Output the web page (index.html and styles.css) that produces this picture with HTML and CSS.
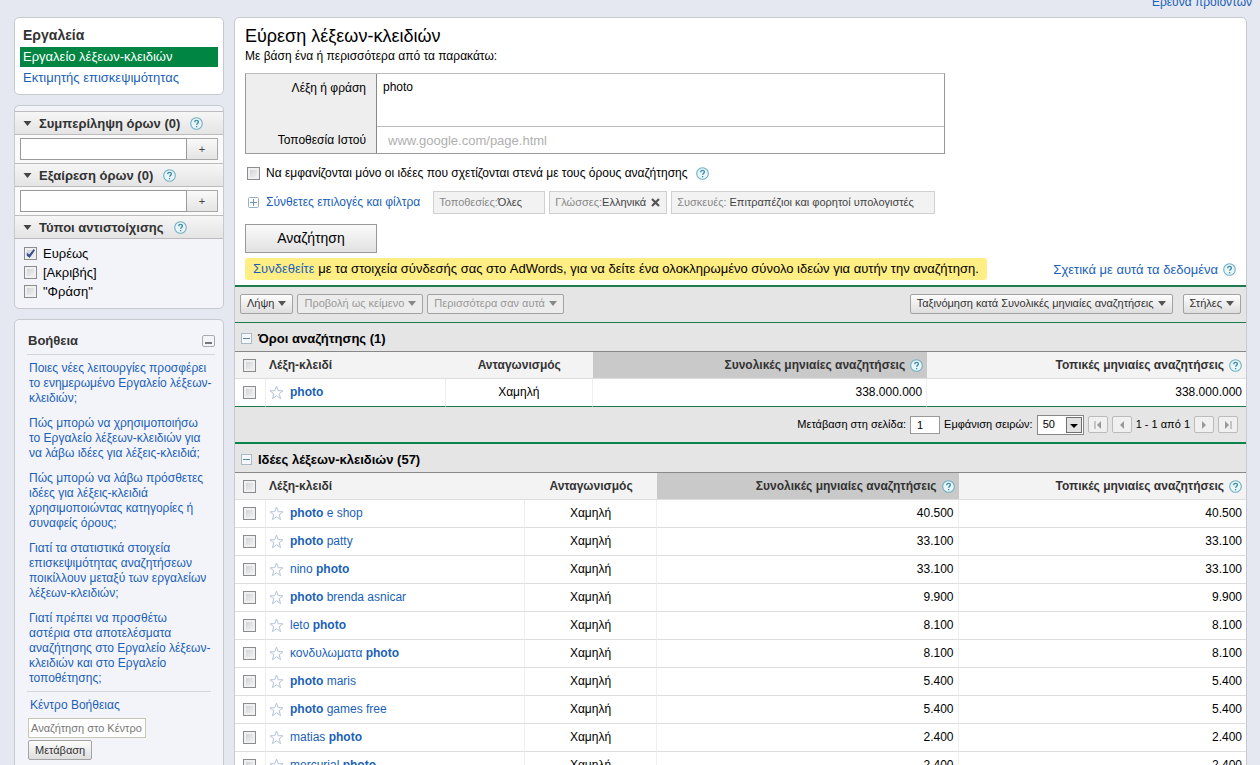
FILE: index.html
```html
<!DOCTYPE html>
<html lang="el">
<head>
<meta charset="utf-8">
<title>Εργαλείο λέξεων-κλειδιών</title>
<link rel="stylesheet" href="styles.css">
</head>
<body>
<svg width="0" height="0" class="defs" aria-hidden="true">
  <symbol id="help" viewBox="0 0 13 13"><circle cx="6.500" cy="6.500" r="5.800" fill="#e9f6fb" stroke="#6faec2" stroke-width="1.100"/><path d="M4.700 5.200c0-2.400 3.800-2.300 3.700-.1 0 1.300-1.800 1.300-1.800 2.700M6.600 9v1.300" fill="none" stroke="#3d8ba5" stroke-width="1.300"/></symbol>
  <symbol id="star" viewBox="0 0 15 15"><path d="M7.500 1l1.700 4.700 4.800.1-3.800 3 1.400 4.900-4.100-2.900-4.100 2.900 1.400-4.900-3.800-3 4.800-.1z" fill="#fff" stroke="#b4c2dc"/></symbol>
  <symbol id="minus" viewBox="0 0 11 11"><rect x=".5" y=".5" width="10" height="10" fill="#f4f8fa" stroke="#a9b9c6"/><path d="M2 5.500h7" stroke="#5b8599"/></symbol>
  <symbol id="plus" viewBox="0 0 11 11"><rect x=".5" y=".5" width="10" height="10" rx="1" fill="#fafcfd" stroke="#9dafbd"/><path d="M2 5.500h7M5.500 2v7" stroke="#7895a8"/></symbol>
  <symbol id="down" viewBox="0 0 8 5"><path d="M0 0h8L4 5z" fill="currentColor"/></symbol>
</svg>
<header class="top"><a href="#">Έρευνα προϊόντων</a></header>
<div class="page">
  <aside class="side">
    <nav class="card tools">
      <h2>Εργαλεία</h2>
      <a class="current" href="#">Εργαλείο λέξεων-κλειδιών</a>
      <a href="#">Εκτιμητής επισκεψιμότητας</a>
    </nav>
    <section class="card filters">
      <h3><svg class="tri"><use href="#down"/></svg>Συμπερίληψη όρων (0)<svg class="help"><use href="#help"/></svg></h3>
      <div class="add"><input type="text" aria-label="Συμπερίληψη όρων"><button>+</button></div>
      <h3><svg class="tri"><use href="#down"/></svg>Εξαίρεση όρων (0)<svg class="help"><use href="#help"/></svg></h3>
      <div class="add"><input type="text" aria-label="Εξαίρεση όρων"><button>+</button></div>
      <h3><svg class="tri"><use href="#down"/></svg>Τύποι αντιστοίχισης<svg class="help"><use href="#help"/></svg></h3>
      <div class="types">
        <label><input type="checkbox" checked>Ευρέως</label>
        <label><input type="checkbox">[Ακριβής]</label>
        <label><input type="checkbox">"Φράση"</label>
      </div>
    </section>
    <section class="card helpbox">
      <div class="helphead"><h2>Βοήθεια</h2><button class="fold" aria-label="Σύμπτυξη"></button></div>
      <ul>
        <li><a href="#">Ποιες νέες λειτουργίες προσφέρει<br>το ενημερωμένο Εργαλείο λέξεων-<br>κλειδιών;</a></li>
        <li><a href="#">Πώς μπορώ να χρησιμοποιήσω<br>το Εργαλείο λέξεων-κλειδιών για<br>να λάβω ιδέες για λέξεις-κλειδιά;</a></li>
        <li><a href="#">Πώς μπορώ να λάβω πρόσθετες<br>ιδέες για λέξεις-κλειδιά<br>χρησιμοποιώντας κατηγορίες ή<br>συναφείς όρους;</a></li>
        <li><a href="#">Γιατί τα στατιστικά στοιχεία<br>επισκεψιμότητας αναζητήσεων<br>ποικίλλουν μεταξύ των εργαλείων<br>λέξεων-κλειδιών;</a></li>
        <li><a href="#">Γιατί πρέπει να προσθέτω<br>αστέρια στα αποτελέσματα<br>αναζήτησης στο Εργαλείο λέξεων-<br>κλειδιών και στο Εργαλείο<br>τοποθέτησης;</a></li>
      </ul>
      <div class="center">
        <a href="#">Κέντρο Βοήθειας</a>
        <input type="text" placeholder="Αναζήτηση στο Κέντρο" aria-label="Αναζήτηση στο Κέντρο">
        <button class="btn">Μετάβαση</button>
      </div>
    </section>
  </aside>
  <main class="main">
    <section class="search">
      <h1>Εύρεση λέξεων-κλειδιών</h1>
      <p class="sub">Με βάση ένα ή περισσότερα από τα παρακάτω:</p>
      <div class="query">
        <label for="word">Λέξη ή φράση</label><textarea id="word">photo</textarea>
        <label for="site">Τοποθεσία Ιστού</label><input id="site" type="text" placeholder="www.google.com/page.html">
      </div>
      <div class="only"><input type="checkbox" id="only"><label for="only">Να εμφανίζονται μόνο οι ιδέες που σχετίζονται στενά με τους όρους αναζήτησης</label><svg class="help"><use href="#help"/></svg></div>
      <div class="options">
        <svg class="box"><use href="#plus"/></svg><a href="#">Σύνθετες επιλογές και φίλτρα</a>
        <span class="chip loc"><i>Τοποθεσίες:</i>Όλες</span>
        <span class="chip lang"><i>Γλώσσες:</i>Ελληνικά<svg viewBox="0 0 9 9"><path d="M1 1l7 7M8 1L1 8" stroke="#555" stroke-width="2.200"/></svg></span>
        <span class="chip dev"><i>Συσκευές:</i> Επιτραπέζιοι και φορητοί υπολογιστές</span>
      </div>
      <button class="go">Αναζήτηση</button>
      <div class="notice">
        <p><a href="#">Συνδεθείτε</a> με τα στοιχεία σύνδεσής σας στο AdWords, για να δείτε ένα ολοκληρωμένο σύνολο ιδεών για αυτήν την αναζήτηση.</p>
        <a class="about" href="#">Σχετικά με αυτά τα δεδομένα<svg class="help"><use href="#help"/></svg></a>
      </div>
    </section>
    <div class="bar">
      <button class="btn">Λήψη<svg class="tri"><use href="#down"/></svg></button>
      <button class="btn" disabled>Προβολή ως κείμενο<svg class="tri"><use href="#down"/></svg></button>
      <button class="btn" disabled>Περισσότερα σαν αυτά<svg class="tri"><use href="#down"/></svg></button>
      <span class="push"></span>
      <button class="btn">Ταξινόμηση κατά Συνολικές μηνιαίες αναζητήσεις<svg class="tri"><use href="#down"/></svg></button>
      <button class="btn cols">Στήλες<svg class="tri"><use href="#down"/></svg></button>
    </div>
    <h2 class="group"><svg class="box"><use href="#minus"/></svg>Όροι αναζήτησης (1)</h2>
    <table class="terms">
      <colgroup><col class="c-check"><col class="c-key"><col class="c-comp"><col class="c-global"><col></colgroup>
      <thead><tr><th><input type="checkbox" aria-label="Όλα"></th><th class="key">Λέξη-κλειδί</th><th class="comp">Ανταγωνισμός</th><th class="num sorted"><span>Συνολικές μηνιαίες αναζητήσεις<svg class="help"><use href="#help"/></svg></span></th><th class="num"><span>Τοπικές μηνιαίες αναζητήσεις<svg class="help"><use href="#help"/></svg></span></th></tr></thead>
      <tbody><tr><td><input type="checkbox" aria-label="photo"></td><td class="key"><span><svg class="star"><use href="#star"/></svg><a href="#"><b>photo</b></a></span></td><td class="comp">Χαμηλή</td><td class="num">338.000.000</td><td class="num">338.000.000</td></tr></tbody>
    </table>
    <div class="pager">
      <label for="pg">Μετάβαση στη σελίδα:</label><input id="pg" type="text" value="1">
      <label for="rows">Εμφάνιση σειρών:</label>
      <span class="pick"><select id="rows"><option>50</option></select><svg viewBox="0 0 16 16"><rect x=".5" y=".5" width="15" height="15" fill="#e2e2e2" stroke="#707070"/><path d="M4 7h8l-4 4z" fill="#000"/></svg></span>
      <button aria-label="Πρώτη"><svg viewBox="0 0 10 8"><path d="M2 0v8" stroke="#999"/><path d="M8 0v8L4 4z" fill="#999"/></svg></button>
      <button aria-label="Προηγούμενη"><svg viewBox="0 0 10 8"><path d="M7 0v8L3 4z" fill="#999"/></svg></button>
      <span>1 - 1 από 1</span>
      <button aria-label="Επόμενη"><svg viewBox="0 0 10 8"><path d="M3 0v8l4-4z" fill="#999"/></svg></button>
      <button aria-label="Τελευταία"><svg viewBox="0 0 10 8"><path d="M2 0v8l4-4z" fill="#999"/><path d="M8 0v8" stroke="#999"/></svg></button>
    </div>
    <h2 class="group"><svg class="box"><use href="#minus"/></svg>Ιδέες λέξεων-κλειδιών (57)</h2>
    <table class="ideas">
      <colgroup><col class="c-check"><col class="c-key"><col class="c-comp"><col class="c-global"><col></colgroup>
      <thead><tr><th><input type="checkbox" aria-label="Όλα"></th><th class="key">Λέξη-κλειδί</th><th class="comp">Ανταγωνισμός</th><th class="num sorted"><span>Συνολικές μηνιαίες αναζητήσεις<svg class="help"><use href="#help"/></svg></span></th><th class="num"><span>Τοπικές μηνιαίες αναζητήσεις<svg class="help"><use href="#help"/></svg></span></th></tr></thead>
      <tbody>
      <tr><td><input type="checkbox" aria-label="photo e shop"></td><td class="key"><span><svg class="star"><use href="#star"/></svg><a href="#"><b>photo</b> e shop</a></span></td><td class="comp">Χαμηλή</td><td class="num">40.500</td><td class="num">40.500</td></tr>
      <tr><td><input type="checkbox" aria-label="photo patty"></td><td class="key"><span><svg class="star"><use href="#star"/></svg><a href="#"><b>photo</b> patty</a></span></td><td class="comp">Χαμηλή</td><td class="num">33.100</td><td class="num">33.100</td></tr>
      <tr><td><input type="checkbox" aria-label="nino photo"></td><td class="key"><span><svg class="star"><use href="#star"/></svg><a href="#">nino <b>photo</b></a></span></td><td class="comp">Χαμηλή</td><td class="num">33.100</td><td class="num">33.100</td></tr>
      <tr><td><input type="checkbox" aria-label="photo brenda asnicar"></td><td class="key"><span><svg class="star"><use href="#star"/></svg><a href="#"><b>photo</b> brenda asnicar</a></span></td><td class="comp">Χαμηλή</td><td class="num">9.900</td><td class="num">9.900</td></tr>
      <tr><td><input type="checkbox" aria-label="leto photo"></td><td class="key"><span><svg class="star"><use href="#star"/></svg><a href="#">leto <b>photo</b></a></span></td><td class="comp">Χαμηλή</td><td class="num">8.100</td><td class="num">8.100</td></tr>
      <tr><td><input type="checkbox" aria-label="κονδυλωματα photo"></td><td class="key"><span><svg class="star"><use href="#star"/></svg><a href="#">κονδυλωματα <b>photo</b></a></span></td><td class="comp">Χαμηλή</td><td class="num">8.100</td><td class="num">8.100</td></tr>
      <tr><td><input type="checkbox" aria-label="photo maris"></td><td class="key"><span><svg class="star"><use href="#star"/></svg><a href="#"><b>photo</b> maris</a></span></td><td class="comp">Χαμηλή</td><td class="num">5.400</td><td class="num">5.400</td></tr>
      <tr><td><input type="checkbox" aria-label="photo games free"></td><td class="key"><span><svg class="star"><use href="#star"/></svg><a href="#"><b>photo</b> games free</a></span></td><td class="comp">Χαμηλή</td><td class="num">5.400</td><td class="num">5.400</td></tr>
      <tr><td><input type="checkbox" aria-label="matias photo"></td><td class="key"><span><svg class="star"><use href="#star"/></svg><a href="#">matias <b>photo</b></a></span></td><td class="comp">Χαμηλή</td><td class="num">2.400</td><td class="num">2.400</td></tr>
      <tr><td><input type="checkbox" aria-label="mercurial photo"></td><td class="key"><span><svg class="star"><use href="#star"/></svg><a href="#">mercurial <b>photo</b></a></span></td><td class="comp">Χαμηλή</td><td class="num">2.400</td><td class="num">2.400</td></tr>
      </tbody>
    </table>
  </main>
</div>
</body>
</html>
```
FILE: styles.css
```css
* { box-sizing: border-box; }
html, body { height: 100%; }
body { margin: 0; overflow: hidden; background: #e5e8f0; color: #000; font: 12px/15px "Liberation Sans", Arial, sans-serif; }
h1, h2, h3, p, ul { margin: 0; padding: 0; }
ul { list-style: none; }
a { color: #1a5fb8; text-decoration: none; }
input, button, textarea, select { font: inherit; color: inherit; margin: 0; }
svg { flex: none; display: block; }
.defs { position: absolute; }
.help { width: 13px; height: 13px; }
.tri { width: 8px; height: 5px; }
.box { width: 11px; height: 11px; }
.star { width: 15px; height: 15px; }

input[type="checkbox"] { appearance: none; display: block; flex: none; width: 13px; height: 13px; border: 1px solid #8a8c8e; background: linear-gradient(135deg, #c9ccd0, #f7f7f7); box-shadow: inset 0 0 0 2px #f0f0f0; }
input[type="checkbox"]:checked::before { content: ""; display: block; width: 9px; height: 9px; margin: 1px; background: #3a4d92; clip-path: polygon(8% 38%, 36% 60%, 86% 0, 100% 14%, 40% 100%, 8% 72%); }

.top { display: flex; justify-content: flex-end; height: 22px; margin-top: -5px; padding-right: 8px; }
.page { display: flex; align-items: flex-start; gap: 10px; padding: 0 13px 0 14px; }
.side { flex: none; width: 210px; display: flex; flex-direction: column; gap: 10px; }
.card { background: #f3f4f9; border: 1px solid #c6c9ce; border-radius: 5px; }

.tools { background: #fff; padding: 7px 5px 6px; font-size: 13px; line-height: 20px; }
.tools h2 { padding: 0 0 2px 3px; font-size: 14px; line-height: 20px; color: #333; }
.tools a { display: block; padding: 1px 0 0 3px; }
.tools .current { padding-top: 0; color: #fff; background: #008542; }

.filters { padding-top: 5px; }
.filters h3 { display: flex; align-items: center; height: 24px; padding-left: 8px; border: solid #bcbcbc; border-width: 1px 0; background: linear-gradient(#f6f6f6, #e4e4e4); font-size: 13px; color: #333; }
.filters h3 .tri { width: 9px; margin-right: 7px; color: #444; }
.filters h3 .help { margin-left: 10px; }
.add { display: flex; height: 28px; padding: 3px 5px; background: #fafafa; }
.add input { flex: 1; min-width: 0; border: 1px solid #999; background: #fff; }
.add button { width: 31px; padding: 0; border: 1px solid #aaa; border-left: 0; background: linear-gradient(#fafafa, #e4e4e4); font-size: 11px; line-height: 15px; color: #444; }
.types { padding: 5px 9px 7px; font-size: 13px; line-height: 19px; }
.types label { display: flex; align-items: center; gap: 6px; }

.helpbox { padding: 11px 12px 40px; }
.helphead { display: flex; align-items: center; justify-content: space-between; height: 24px; padding: 0 0 4px 1px; border-bottom: 1px solid #d2d5da; margin-right: -4px; }
.helphead h2 { font-size: 13px; color: #333; }
.fold { width: 13px; height: 12px; padding: 6px 2px 2px; border: 1px solid #aaa; border-radius: 2px; background: #fff linear-gradient(#777, #777) no-repeat content-box; }
.helpbox ul { padding: 6px 0 5px 2px; white-space: nowrap; }
.helpbox li + li { margin-top: 10px; }
.center { display: flex; flex-direction: column; align-items: flex-start; border-top: 1px solid #d2d5da; padding: 5px 0 0 1px; }
.center a { padding-left: 2px; line-height: 16px; }
.center input { width: 118px; height: 20px; margin: 5px 0 2px; padding: 0 2px; border: 1px solid #c8c6b4; background: #fff; font-size: 11px; }
.center input::placeholder { color: #777; }

.btn { display: flex; align-items: center; gap: 4px; height: 20px; padding: 0 6px; border: 1px solid #a3a3a3; border-radius: 2px; background: linear-gradient(#fdfdfd, #dedede); color: #333; font-size: 11px; white-space: nowrap; }
.btn .tri { color: #555; }
.btn:disabled { color: #999; background: #ececec; }
.btn:disabled .tri { color: #888; }

.main { flex: 1; min-width: 0; background: #fff; border: 1px solid #c6c9ce; border-radius: 5px; }
.search { padding: 7px 10px 5px; }
.search h1 { font-size: 18px; font-weight: 400; line-height: 22px; }
.sub { line-height: 18px; }
.query { display: grid; grid-template-columns: 131px 1fr; grid-template-rows: 52px 27px; width: 70.600%; margin-top: 8px; border: 1px solid #999; border-top-color: #bbb; }
.query label { padding: 7px 10px 0 0; text-align: right; background: #eee; border-right: 1px solid #888; }
.query textarea, .query input { border: 0; margin: 0; padding: 6px; resize: none; background: #fff; outline: 0; min-width: 0; }
.query input { padding: 1px 11px 0; border-top: 1px solid #bbb; font-size: 13px; }
.query input::placeholder { color: #b0b0b0; }
.only { display: flex; align-items: center; height: 20px; margin-top: 9px; padding-left: 2px; gap: 6px; }
.only .help { margin-left: 2px; }
.options { display: flex; align-items: center; margin-top: 8px; padding-left: 3px; white-space: nowrap; }
.options .box { margin-right: 7px; }
.options a { margin-right: 13px; }
.chip { display: flex; align-items: center; height: 23px; padding: 0 5px; margin-right: 4px; border: 1px solid #d0d0d0; background: #f2f2f2; color: #444; font-size: 11px; }
.chip i { font-style: normal; color: #888; white-space: pre; }
.chip svg { width: 9px; height: 9px; margin-left: 5px; }
.loc { width: 112px; }
.lang { width: 118px; }
.dev { width: 264px; }
.dev i { margin-right: 3px; }
.go { display: block; width: 132px; height: 29px; margin-top: 10px; border: 1px solid #999; background: linear-gradient(#fafafa, #e2e2e2); font-size: 14px; }
.notice { display: flex; justify-content: space-between; align-items: center; margin-top: 5px; white-space: nowrap; font-size: 13px; }
.notice p { padding: 0 8px; line-height: 22px; background: #ffee84; border-radius: 3px; }
.about { display: flex; align-items: center; gap: 5px; }

.bar { display: flex; align-items: center; gap: 4px; height: 38px; padding: 0 5px 2px; border-top: 2px solid #1c7a4c; border-bottom: 1px solid #1c7a4c; background: #e5e5e5; }
.push { flex: 1; }
.cols { margin-left: 6px; }
.group { display: flex; align-items: center; gap: 6px; height: 28px; padding: 2px 6px 0; background: #e5e5e5; font-size: 13px; }

table { width: 100%; table-layout: fixed; border-spacing: 0; }
.c-check { width: 31px; }
.terms .c-key { width: 17.800%; }
.terms .c-comp { width: 14.500%; }
.terms .c-global { width: 33.100%; }
.ideas .c-key { width: 25.600%; }
.ideas .c-comp { width: 13.100%; }
.ideas .c-global { width: 29.800%; }
th, td { padding: 0; text-align: left; border-bottom: 1px solid #ddd; }
th { height: 28px; border-top: 1px solid #888; background: #f3f3f3; color: #333; }
td { height: 28px; border-right: 1px solid #eee; }
td:last-child { border-right: 0; }
th input[type="checkbox"], td input[type="checkbox"] { margin-left: 8px; }
.key { padding-left: 3px; }
.key span { display: flex; align-items: center; gap: 6px; }
.comp { text-align: center; }
.num { text-align: right; padding-right: 4px; }
th.num span { display: flex; align-items: center; justify-content: flex-end; gap: 5px; }
th.sorted { background: #c9c9c9; }
.terms td { border-bottom: 1px solid #1c7a4c; }

.pager { display: flex; align-items: center; justify-content: flex-end; gap: 4px; height: 37px; padding-right: 8px; border-bottom: 2px solid #0a8449; background: #e5e5e5; font-size: 11px; }
.pager > input { width: 30px; height: 18px; border: 1px solid #999; background: #fff; padding: 0 6px; }
.pick { position: relative; }
.pick select { appearance: none; display: block; width: 47px; height: 20px; padding: 0 5px; border: 1px solid #888; border-radius: 0; background: #fff; font-size: 11px; }
.pick svg { position: absolute; right: 2px; top: 2px; width: 16px; height: 16px; pointer-events: none; }
.pager button { display: grid; place-items: center; width: 20px; height: 17px; padding: 0; border: 1px solid #bbb; border-radius: 2px; background: #f0f0f0; }
.pager button svg { width: 10px; height: 8px; }
```
